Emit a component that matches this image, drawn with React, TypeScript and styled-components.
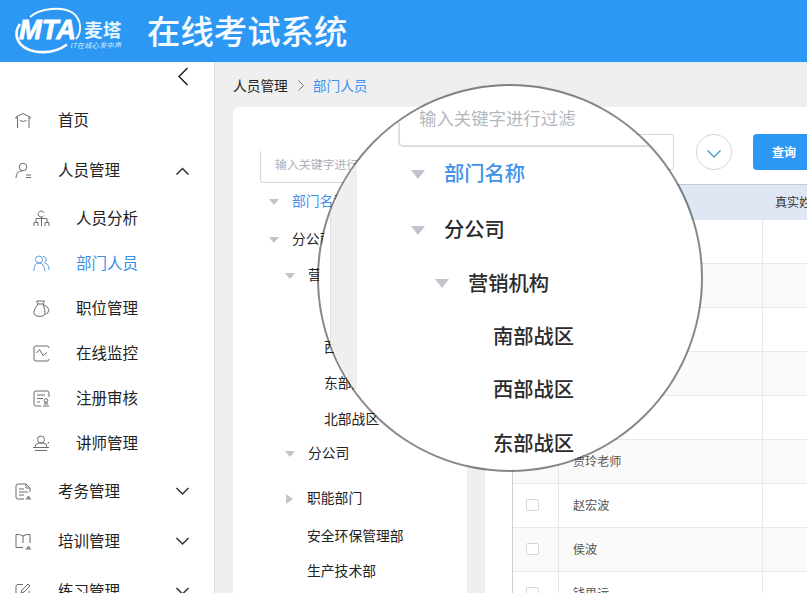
import React from "react";
import styled, { createGlobalStyle } from "styled-components";

const Global = createGlobalStyle`
  * { box-sizing: border-box; }
  html, body { margin: 0; overflow: hidden; background: #efefef; }
  body { font-family: "Liberation Sans", "Noto Sans CJK SC", sans-serif; color: #222; }
`;

const Page = styled.div`width: 807px; height: 593px; overflow: hidden; position: relative; display: flex; flex-direction: column;`;
const Header = styled.header`height: 62px; flex: none; background: #2d98f3; display: flex; align-items: center; color: #fff;`;
const LogoSvg = styled.svg`width: 120px; height: 56px; margin-left: 8px; flex: none;`;
const Title = styled.h1`margin: 3px 0 0 19px; font-size: 33.4px; line-height: 60px; font-weight: 500; color: #f7fbff; height: 60px; white-space: nowrap;`;
const Body = styled.div`flex: 1; display: flex; min-height: 0;`;

const Sidebar = styled.nav`width: 215px; flex: none; background: #fff; border-right: 1px solid #dedede; overflow: hidden;`;
const Collapse = styled.div`height: 33px; display: flex; justify-content: flex-end; padding: 5px 25px 0 0; svg { display: block; }`;
const MenuItem = styled.div<{ $h: number; $sub?: boolean; $active?: boolean }>`
  height: ${(p) => p.$h}px; display: flex; align-items: center;
  padding-left: ${(p) => (p.$sub ? 33 : 15)}px; padding-right: 24px;
  color: ${(p) => (p.$active ? "#3a8ee6" : "#222")};
`;
const MenuIcon = styled.svg<{ $active?: boolean }>`
  width: 17px; height: 17px; flex: none; fill: none; stroke: ${(p) => (p.$active ? "#5c9fe8" : "#6c6c74")};
  stroke-width: 1; overflow: visible;
`;
const MenuLabel = styled.span`margin-left: 26px; padding-top: 1px; flex: 1; font-size: 15.5px; line-height: 20px; white-space: nowrap;`;
const Arrow = styled.svg`width: 15px; height: 9px; fill: none; stroke: #333; stroke-width: 1.5;`;

const Main = styled.main`flex: 1; min-width: 0; background: #efefef; border-top: 1px solid #d7effc; display: flex; flex-direction: column;`;
const Crumbs = styled.div`height: 44px; flex: none; display: flex; align-items: center; padding: 0 0 1px 18px; font-size: 13.7px; svg { margin: 1px 9px 0 10px; }`;
const CrumbActive = styled.span`color: #3f92ea;`;
const Panels = styled.div`flex: 1; display: flex; gap: 18px; padding-left: 18px; min-height: 0;`;
const TreePanel = styled.section`width: 234px; flex: none; background: #fff; border-radius: 6px 0 0 0; padding-top: 43px; overflow: hidden;`;
const Search = styled.div`
  margin-left: 27px; width: 190px; height: 33px; border: 1px solid #d5d7dc; border-top-color: transparent; border-radius: 3px;
  padding-left: 14px; font-size: 11.9px; line-height: 29px; color: #adb0b8; white-space: nowrap;
`;
const TreeRow = styled.div<{ $h: number; $indent: number; $active?: boolean }>`
  height: ${(p) => p.$h}px; padding-left: ${(p) => p.$indent}px; display: flex; align-items: center;
  font-size: 13.8px; line-height: 20px; white-space: nowrap; color: ${(p) => (p.$active ? "#3f92ea" : "#222")};
`;
const Caret = styled.i<{ $gap: number; $big?: boolean }>`
  flex: none; margin-right: ${(p) => p.$gap}px;
  border: solid transparent; border-width: ${(p) => (p.$big ? "9px 7.5px 0" : "6px 5px 0")}; border-top-color: #c0c4cc;
`;
const CaretRight = styled.i`flex: none; margin-right: 14px; border: solid transparent; border-width: 5px 0 5px 7px; border-left-color: #c0c4cc;`;

const ListPanel = styled.section`flex: 1; min-width: 0; background: #fff; overflow: hidden; display: flex; flex-direction: column;`;
const Toolbar = styled.div`height: 77px; flex: none; display: flex; align-items: center; padding: 13px 0 0 27px;`;
const Field = styled.div`flex: none; width: 162px; height: 36px; border: 1px solid #d6d8dc; border-radius: 3px;`;
const RoundButton = styled.button`
  width: 36px; height: 36px; margin: 0 21px 0 22px; padding: 3px 0 0; border: 1px solid #d3d6da; border-radius: 50%; background: #fff;
  display: flex; align-items: center; justify-content: center; flex: none;
`;
const QueryButton = styled.button`
  width: 90px; height: 36px; flex: none; border: 0; border-radius: 4px; background: #2d98f3; color: #fff; font-size: 12px; font-weight: 700;
  font-family: inherit; text-align: left; padding: 0 0 1px 19px;
`;
const Table = styled.div`margin-left: 27px; flex: none; width: 340px; border-left: 1px solid #cfcfcf; border-top: 1px solid #c3c9d2;`;
const Row = styled.div<{ $head?: boolean; $stripe?: boolean }>`
  display: grid; grid-template-columns: 46px 204px 90px; height: ${(p) => (p.$head ? 35 : 44)}px;
  background: ${(p) => (p.$head ? "#dfe7f5" : p.$stripe ? "#fafafa" : "#fff")};
  border-bottom: ${(p) => (p.$head ? 0 : 1)}px solid #e8e8ea; color: ${(p) => (p.$head ? "#333" : "#555")};
`;
const Cell = styled.div<{ $line?: boolean; $pad: number }>`
  display: flex; align-items: center; padding: 0 0 2px ${(p) => p.$pad}px; font-size: 12.1px; white-space: nowrap;
  border-right: ${(p) => (p.$line ? 1 : 0)}px solid #e8e8ea;
`;
const Check = styled.span`width: 13px; height: 12px; border: 1px solid #d6d8dc; border-radius: 2px; background: #fff;`;

const Lens = styled.aside`
  position: absolute; left: 317px; top: 84px; width: 386px; height: 388px; border-radius: 50%; overflow: hidden;
  border: 2px solid rgba(20, 20, 20, 0.5); background: #fff; background-clip: padding-box; display: flex;
`;
const LensEdge = styled.div`width: 12px; flex: none; border-right: 1px solid #e2e2e2;`;
const LensGutter = styled.div`width: 26px; flex: none; background: #efefef;`;
const LensBody = styled.div`flex: 1; padding-left: 41px;`;
const LensSearch = styled.div`
  height: 61px; border: 2px solid #dcdde1; border-top: 0; border-radius: 5px; padding: 18px 0 0 19px; font-size: 17.4px; line-height: 30px;
  color: #b4b7be; white-space: nowrap;
`;
const LensRow = styled.div<{ $h: number; $indent: number; $active?: boolean }>`
  height: ${(p) => p.$h}px; padding: 0 0 2px ${(p) => p.$indent}px; display: flex; align-items: center;
  font-size: 20.3px; line-height: 28px; white-space: nowrap; font-weight: 500; color: ${(p) => (p.$active ? "#3f92ea" : "#2b2b2b")};
`;

const icons = {
  home: <path d="M1 7V5l7-3.500L15 5v2M2.500 16V5M14 5v11M5 8.500q3.200 2 6.500 0" />,
  user: <><circle cx="8" cy="5" r="3.800" /><path d="M1 16Q1 9.500 7 8.800M11 13h5M11 15.500h5" /></>,
  org: <><path d="M11 3A3 3 0 1 0 10.500 6M8.500 6.500v9.500M3 12.500V8.500h11v4M1 16v-3.500h4V16M12 16v-3.500h4V16" /></>,
  users: <><circle cx="6" cy="4.500" r="3.500" /><path d="M1 16q0-8 5-8t6 8M10 1.300a3.500 3.500 0 0 1 1.500 6.500Q16 9 16 15" /></>,
  bag: <path d="M3.500 1h8l-1.500 3H5zM5 4Q0 11 1 14q2 2.500 6 2.500t5-2.500Q12.500 10 10 4M10.500 4.500q4 2 5.500 5-.5 4-3.500 5" />,
  monitor: <path d="M16 3a2 2 0 0 0-2-2H3a2 2 0 0 0-2 2v11a2 2 0 0 0 2 2h11a2 2 0 0 0 2-2M3.500 8l3-3.500L10 10.500l4-3" />,
  audit: <><path d="M16 7V3a2 2 0 0 0-2-2H3a2 2 0 0 0-2 2v11a2 2 0 0 0 2 2h5M4 5h8M4 8.500h6M4 12h3" /><circle cx="13" cy="10.500" r="1.800" /><path d="M12.500 12l-1 2h3l-1-2M10 16h6" /></>,
  teacher: <><circle cx="8" cy="4.500" r="3.500" /><path d="M2 12q0-3.500 4-4h4q4 .5 4 4M0 12.500h16M2 15.500h12M14.500 9l1.500-2" /></>,
  exam: <><path d="M15 9V5l-4-4H3a2 2 0 0 0-2 2v11a2 2 0 0 0 2 2h6M11 1v4h4M4 6h5M4 9h9M4 12h5M10.500 16H16" /><path d="M12 15h3l-1.500-2z" /></>,
  book: <><path d="M8 3v7M8 3Q5 1 1 1.500v13h7M8 3q3-2 7-1.500V10M10.500 16H16" /><path d="M12 15h3l-1.500-2z" /></>,
  edit: <path d="M8 1.500H3a2 2 0 0 0-2 2v11a2 2 0 0 0 2 2h11V8M6 10l1-3 6-6 2 2-6 6z" />,
};

type Item = { icon: keyof typeof icons; text: string; h: number; sub?: boolean; active?: boolean; arrow?: "up" | "down" };
const menu: Item[] = [
  { icon: "home", text: "首页", h: 50 },
  { icon: "user", text: "人员管理", h: 51, arrow: "up" },
  { icon: "org", text: "人员分析", h: 45, sub: true },
  { icon: "users", text: "部门人员", h: 45, sub: true, active: true },
  { icon: "bag", text: "职位管理", h: 45, sub: true },
  { icon: "monitor", text: "在线监控", h: 45, sub: true },
  { icon: "audit", text: "注册审核", h: 45, sub: true },
  { icon: "teacher", text: "讲师管理", h: 45, sub: true },
  { icon: "exam", text: "考务管理", h: 50, arrow: "down" },
  { icon: "book", text: "培训管理", h: 50, arrow: "down" },
  { icon: "edit", text: "练习管理", h: 50, arrow: "down" },
];

const names = ["", "", "", "", "", "贾玲老师", "赵宏波", "侯波", "钱思远"];

function Logo() {
  return (
    <LogoSvg viewBox="8 4 120 56">
      <g fill="none" stroke="#fff">
        <path d="M30 18C40 9 62 7 73 14c9 7 9 19 3 26" strokeWidth="1.8" />
        <path d="M20 25C12 36 18 49 35 52.500c13 2 24-1 32-7" strokeWidth="2.6" />
      </g>
      <text x="19" y="40" fontFamily="Liberation Sans" fontSize="27" fontWeight="700" fontStyle="italic" fill="#fff" stroke="#fff" strokeWidth=".8" textLength="57" lengthAdjust="spacingAndGlyphs">MTA</text>
      <text x="84" y="37.500" fontFamily="Noto Sans CJK SC" fontSize="18.700" fontWeight="700" fill="#e6f6ff">麦塔</text>
      <text x="70" y="49" fontFamily="Noto Sans CJK SC" fontSize="7" fontStyle="italic" fill="#d9efff" textLength="51">IT在线心发中声</text>
    </LogoSvg>
  );
}

export default function App() {
  return (
    <Page>
      <Global />
      <Header><Logo /><Title>在线考试系统</Title></Header>
      <Body>
        <Sidebar>
          <Collapse><svg width="12" height="19" fill="none" stroke="#111" strokeWidth="1.3"><path d="M10.500 1 2 9.500l8.500 8.500" /></svg></Collapse>
          {menu.map((m) => (
            <MenuItem key={m.text} $h={m.h} $sub={m.sub} $active={m.active}>
              <MenuIcon viewBox="0 0 17 17" $active={m.active}>{icons[m.icon]}</MenuIcon>
              <MenuLabel>{m.text}</MenuLabel>
              {m.arrow && <Arrow viewBox="0 0 15 9"><path d={m.arrow === "up" ? "M1.500 8.500l6-6 6 6" : "M1.500 1l6 6 6-6"} /></Arrow>}
            </MenuItem>
          ))}
        </Sidebar>
        <Main>
          <Crumbs>
            <span>人员管理</span>
            <svg width="6" height="11" fill="none" stroke="#777"><path d="M.5.5l5 5-5 5" /></svg>
            <CrumbActive>部门人员</CrumbActive>
          </Crumbs>
          <Panels>
            <TreePanel>
              <Search>输入关键字进行过滤</Search>
              <TreeRow $h={37} $indent={36} $active><Caret $gap={13} />部门名称</TreeRow>
              <TreeRow $h={39} $indent={36}><Caret $gap={13} />分公司</TreeRow>
              <TreeRow $h={34} $indent={52}><Caret $gap={13} />营销机构</TreeRow>
              <TreeRow $h={37} $indent={91}>南部战区</TreeRow>
              <TreeRow $h={36} $indent={91}>西部战区</TreeRow>
              <TreeRow $h={36} $indent={91}>东部战区</TreeRow>
              <TreeRow $h={35} $indent={91}>北部战区</TreeRow>
              <TreeRow $h={33} $indent={52}><Caret $gap={13} />分公司</TreeRow>
              <TreeRow $h={58} $indent={53}><CaretRight />职能部门</TreeRow>
              <TreeRow $h={17} $indent={74}>安全环保管理部</TreeRow>
              <TreeRow $h={54} $indent={74}>生产技术部</TreeRow>
            </TreePanel>
            <ListPanel>
              <Toolbar>
                <Field />
                <RoundButton><svg width="14" height="8" fill="none" stroke="#2d93c9" strokeWidth="1.2"><path d="M.5.5 7 7 13.500.5" /></svg></RoundButton>
                <QueryButton>查询</QueryButton>
              </Toolbar>
              <Table>
                <Row $head><Cell $pad={19} /><Cell $pad={14} /><Cell $pad={12}>真实姓名</Cell></Row>
                {names.map((n, i) => (
                  <Row key={i} $stripe={i % 2 === 1}>
                    <Cell $pad={13} $line><Check /></Cell><Cell $pad={14} $line>{n}</Cell><Cell $pad={12} />
                  </Row>
                ))}
              </Table>
            </ListPanel>
          </Panels>
        </Main>
      </Body>
      <Lens>
        <LensEdge /><LensGutter />
        <LensBody>
          <LensSearch>输入关键字进行过滤</LensSearch>
          <LensRow $h={56} $indent={13} $active><Caret $gap={19} $big />部门名称</LensRow>
          <LensRow $h={56} $indent={13}><Caret $gap={19} $big />分公司</LensRow>
          <LensRow $h={51} $indent={37}><Caret $gap={19} $big />营销机构</LensRow>
          <LensRow $h={55} $indent={95}>南部战区</LensRow>
          <LensRow $h={52} $indent={95}>西部战区</LensRow>
          <LensRow $h={55} $indent={95}>东部战区</LensRow>
        </LensBody>
      </Lens>
    </Page>
  );
}
